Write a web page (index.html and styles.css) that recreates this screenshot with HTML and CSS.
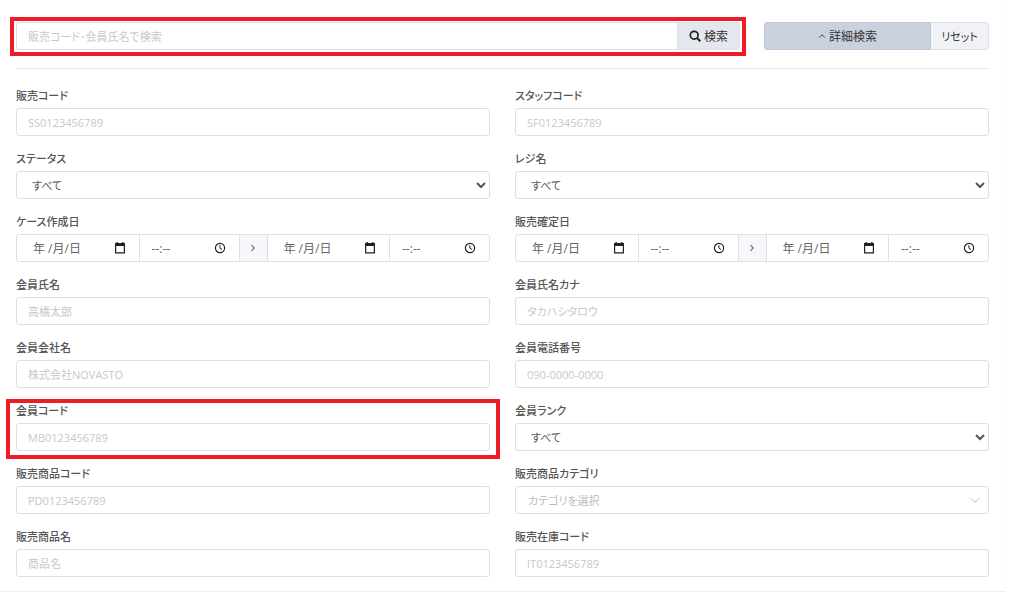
FILE: index.html
```
<!DOCTYPE html>
<html lang="ja">
<head>
<meta charset="UTF-8">
<meta name="viewport" content="width=device-width, initial-scale=1.0">
<title>販売検索</title>
<link rel="stylesheet" href="styles.css">
</head>
<body>

<!-- shared icons -->
<svg class="sprite" aria-hidden="true">
  <symbol id="icon-calendar" viewBox="0 0 12 12">
    <path d="M1 1h1.500V0h1.300v1h4.400V0h1.300v1H11v10.500H1zM2.200 4v6.300h7.600V4z" fill="#222" fill-rule="evenodd"/>
  </symbol>
  <symbol id="icon-clock" viewBox="0 0 12 12">
    <circle cx="6" cy="6" r="4.600" fill="none" stroke="#222" stroke-width="1.200"/>
    <path d="M5.900 3.200v3l2.100 1.300" fill="none" stroke="#222" stroke-width="1"/>
  </symbol>
  <symbol id="icon-right" viewBox="0 0 8 8">
    <path d="M2.500 1.200 5.300 4 2.500 6.800" fill="none" stroke="#777" stroke-width="1.200"/>
  </symbol>
</svg>

<form class="card">
  <div class="toolbar">
    <div class="search marked">
      <input class="search-input" type="text" aria-label="検索" placeholder="販売コード･会員氏名で検索">
      <button class="search-button" type="button">
        <svg class="icon" viewBox="0 0 12 12"><circle cx="5.200" cy="5.200" r="3.900" fill="none" stroke="#222" stroke-width="1.700"/><path d="M8 8l3.300 3.300" stroke="#222" stroke-width="2"/></svg>
        検索
      </button>
    </div>
    <div class="actions">
      <button class="detail-button" type="button">
        <svg class="icon-small" viewBox="0 0 8 8"><path d="M1.200 5.500 4 2.700l2.800 2.800" fill="none" stroke="#444" stroke-width="1"/></svg>
        詳細検索
      </button>
      <button class="reset-button" type="button">リセット</button>
    </div>
  </div>

  <div class="fields">
    <div class="field">
      <label for="sales-code">販売コード</label>
      <input class="control" id="sales-code" type="text" placeholder="SS0123456789">
    </div>
    <div class="field">
      <label for="staff-code">スタッフコード</label>
      <input class="control" id="staff-code" type="text" placeholder="SF0123456789">
    </div>
    <div class="field">
      <label for="status">ステータス</label>
      <select class="control" id="status"><option>すべて</option></select>
    </div>
    <div class="field">
      <label for="register">レジ名</label>
      <select class="control" id="register"><option>すべて</option></select>
    </div>
    <div class="field">
      <label for="created-from">ケース作成日</label>
      <div class="period">
        <div class="date"><input id="created-from" type="text" placeholder="年 /月/日"><svg class="icon"><use href="#icon-calendar"/></svg></div>
        <div class="time"><input type="text" aria-label="開始時刻" placeholder="--:--"><svg class="icon"><use href="#icon-clock"/></svg></div>
        <span class="to"><svg class="icon-small"><use href="#icon-right"/></svg></span>
        <div class="date"><input type="text" aria-label="終了日" placeholder="年 /月/日"><svg class="icon"><use href="#icon-calendar"/></svg></div>
        <div class="time"><input type="text" aria-label="終了時刻" placeholder="--:--"><svg class="icon"><use href="#icon-clock"/></svg></div>
      </div>
    </div>
    <div class="field">
      <label for="fixed-from">販売確定日</label>
      <div class="period">
        <div class="date"><input id="fixed-from" type="text" placeholder="年 /月/日"><svg class="icon"><use href="#icon-calendar"/></svg></div>
        <div class="time"><input type="text" aria-label="開始時刻" placeholder="--:--"><svg class="icon"><use href="#icon-clock"/></svg></div>
        <span class="to"><svg class="icon-small"><use href="#icon-right"/></svg></span>
        <div class="date"><input type="text" aria-label="終了日" placeholder="年 /月/日"><svg class="icon"><use href="#icon-calendar"/></svg></div>
        <div class="time"><input type="text" aria-label="終了時刻" placeholder="--:--"><svg class="icon"><use href="#icon-clock"/></svg></div>
      </div>
    </div>
    <div class="field">
      <label for="member-name">会員氏名</label>
      <input class="control" id="member-name" type="text" placeholder="高橋太郎">
    </div>
    <div class="field">
      <label for="member-kana">会員氏名カナ</label>
      <input class="control" id="member-kana" type="text" placeholder="タカハシタロウ">
    </div>
    <div class="field">
      <label for="company">会員会社名</label>
      <input class="control" id="company" type="text" placeholder="株式会社NOVASTO">
    </div>
    <div class="field">
      <label for="phone">会員電話番号</label>
      <input class="control" id="phone" type="text" placeholder="090-0000-0000">
    </div>
    <div class="field marked">
      <label for="member-code">会員コード</label>
      <input class="control" id="member-code" type="text" placeholder="MB0123456789">
    </div>
    <div class="field">
      <label for="rank">会員ランク</label>
      <select class="control" id="rank"><option>すべて</option></select>
    </div>
    <div class="field">
      <label for="product-code">販売商品コード</label>
      <input class="control" id="product-code" type="text" placeholder="PD0123456789">
    </div>
    <div class="field">
      <label for="category">販売商品カテゴリ</label>
      <div class="category">
        <select class="control" id="category"><option>カテゴリを選択</option></select>
        <svg class="category-arrow" viewBox="0 0 12 12"><path d="M1.500 4 6 8.300 10.500 4" fill="none" stroke="#c0c4cc" stroke-width="1"/></svg>
      </div>
    </div>
    <div class="field">
      <label for="product-name">販売商品名</label>
      <input class="control" id="product-name" type="text" placeholder="商品名">
    </div>
    <div class="field">
      <label for="stock-code">販売在庫コード</label>
      <input class="control" id="stock-code" type="text" placeholder="IT0123456789">
    </div>
  </div>
</form>

</body>
</html>
```
FILE: styles.css
```
* {
  box-sizing: border-box;
}
body {
  margin: 0;
  background-color: #fff;
  color: #555;
  font-family: "Open Sans", "Noto Sans CJK JP", sans-serif;
  font-size: 11px;
  font-feature-settings: "palt";
}
input, select, button {
  min-width: 0;
  margin: 0;
  font: inherit;
  font-feature-settings: inherit;
  color: inherit;
}
.sprite {
  display: none;
}
.card {
  margin-right: 18px;
  padding: 22px 16px 14px 16px;
  border-right: 1px solid #fafafa;
  border-bottom: 1px solid #ebeef5;
}

/* search bar */
.toolbar {
  display: flex;
  gap: 24px;
  padding-bottom: 18px;
  border-bottom: 1px solid #e4e7ed;
}
.search {
  display: flex;
  flex: 1;
}
.search-input {
  flex: 1;
  height: 28px;
  padding: 0 11px;
  border: 1px solid #dce0ea;
  border-right: 0;
  border-radius: 3px 0 0 3px;
}
.search-button, .detail-button, .reset-button {
  display: flex;
  align-items: center;
  justify-content: center;
  gap: 3px;
  height: 28px;
  padding: 0;
  border: 1px solid #dce0ea;
  color: #333;
  cursor: pointer;
}
.search-button {
  width: 63px;
  background-color: #e4e7ed;
  border-radius: 0 3px 3px 0;
  font-size: 12px;
}
.actions {
  display: flex;
  width: 225px;
}
.detail-button {
  flex: 1;
  background-color: #cad1de;
  border-color: #c0c8d6;
  border-radius: 3px 0 0 3px;
  font-size: 12px;
}
.reset-button {
  width: 58px;
  background-color: #f0f2f6;
  border-left: 0;
  border-radius: 0 3px 3px 0;
}
.icon {
  flex: none;
  width: 12px;
  height: 12px;
}
.icon-small {
  flex: none;
  width: 8px;
  height: 8px;
}

/* form fields */
.fields {
  display: grid;
  grid-template-columns: 1fr 1fr;
  gap: 13px 25px;
  padding-top: 17px;
}
.field label {
  display: block;
  margin-bottom: 2px;
  line-height: 20px;
  font-weight: 500;
}
.control {
  display: block;
  width: 100%;
  height: 28px;
  padding: 0 11px;
  background-color: #fff;
  border: 1px solid #dce0ea;
  border-radius: 3px;
}
select.control {
  padding: 0 0 0 11px;
}
::placeholder {
  color: #c8c8c8;
  opacity: 1;
}

/* date range */
.period {
  display: flex;
  height: 28px;
  border: 1px solid #dce0ea;
  border-radius: 3px;
}
.date, .time {
  display: flex;
  align-items: center;
  min-width: 0;
  padding-right: 13px;
  font-size: 12px;
}
.date {
  flex: 5 1 0;
  padding-left: 16px;
  border-right: 1px solid #dce0ea;
}
.time {
  flex: 4 1 0;
  padding-left: 12px;
}
.date input, .time input {
  flex: 1;
  width: 0;
  padding: 0;
  border: 0;
}
.date ::placeholder, .time ::placeholder {
  color: #666;
}
.to {
  display: flex;
  align-items: center;
  justify-content: center;
  width: 29px;
  background-color: #f5f7fa;
  border: solid #dce0ea;
  border-width: 0 1px;
}

/* category picker */
.category {
  position: relative;
}
.category select {
  appearance: none;
  padding-left: 12px;
  color: #b8bcc6;
}
.category-arrow {
  position: absolute;
  top: 8px;
  right: 8px;
  width: 12px;
  height: 12px;
  pointer-events: none;
}

/* red highlight frames */
.marked {
  position: relative;
}
.marked::after {
  content: "";
  position: absolute;
  inset: -5px -6px -6px;
  border: 4px solid #ee1c25;
  pointer-events: none;
}
.field.marked::after {
  inset: -2px -10px -8px;
}
```
